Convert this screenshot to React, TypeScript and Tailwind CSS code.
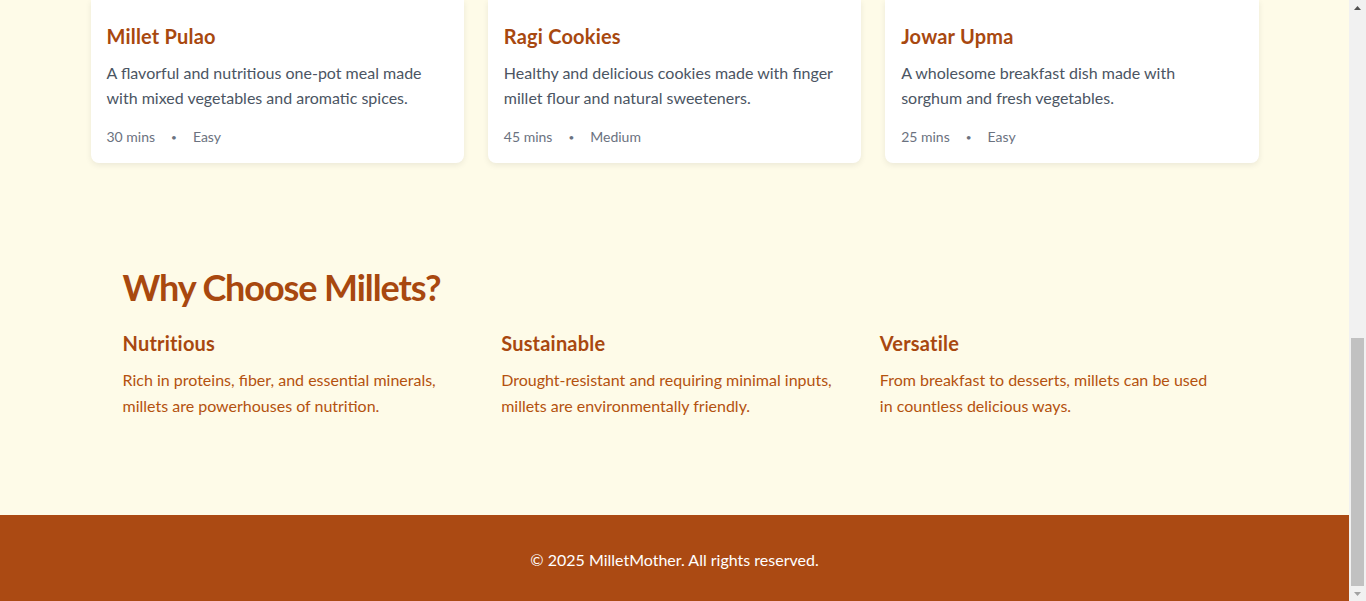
import React from "react";

type Recipe = {
  title: string;
  description: string;
  time: string;
  level: string;
};

const recipes: Recipe[] = [
  {
    title: "Millet Pulao",
    description: "A flavorful and nutritious one-pot meal made with mixed vegetables and aromatic spices.",
    time: "30 mins",
    level: "Easy",
  },
  {
    title: "Ragi Cookies",
    description: "Healthy and delicious cookies made with finger millet flour and natural sweeteners.",
    time: "45 mins",
    level: "Medium",
  },
  {
    title: "Jowar Upma",
    description: "A wholesome breakfast dish made with sorghum and fresh vegetables.",
    time: "25 mins",
    level: "Easy",
  },
];

const reasons = [
  {
    title: "Nutritious",
    text: "Rich in proteins, fiber, and essential minerals, millets are powerhouses of nutrition.",
  },
  {
    title: "Sustainable",
    text: "Drought-resistant and requiring minimal inputs, millets are environmentally friendly.",
  },
  {
    title: "Versatile",
    text: "From breakfast to desserts, millets can be used in countless delicious ways.",
  },
];

const RecipeCard: React.FC<{ recipe: Recipe }> = ({ recipe }) => (
  <div className="bg-white rounded-b-lg shadow-[0_2px_6px_rgba(0,0,0,0.08)] px-4 pt-[22px] pb-4">
    <h3 className="text-xl leading-7 font-bold tracking-[0.01em] text-[#a8480f]">{recipe.title}</h3>
    <p className="mt-[10px] pr-[6px] text-base leading-[25px] text-[#4b5563]">{recipe.description}</p>
    <div className="mt-[17px] flex items-center gap-4 text-sm leading-5 text-[#6b7280]">
      <span>{recipe.time}</span>
      <span className="text-[10px]">•</span>
      <span>{recipe.level}</span>
    </div>
  </div>
);

const Scrollbar: React.FC = () => (
  <aside className="w-[17px] shrink-0 bg-[#f1f1f1] flex flex-col items-center">
    <div className="h-[15px] flex items-center justify-center">
      <svg width="7" height="4" viewBox="0 0 7 4">
        <polygon points="3.5,0 7,4 0,4" fill="#505050" />
      </svg>
    </div>
    <div className="flex-1 w-full flex flex-col justify-end px-[2px]">
      <div className="h-[248px] bg-[#c1c1c1]" />
    </div>
    <div className="h-[15px] flex items-center justify-center">
      <svg width="7" height="4" viewBox="0 0 7 4">
        <polygon points="0,0 7,0 3.5,4" fill="#a3a3a3" />
      </svg>
    </div>
  </aside>
);

export default function App() {
  return (
    <div className="flex h-[601px] overflow-hidden font-['Lato','Noto_Sans',sans-serif]">
      <main className="flex-1 min-w-0 bg-[#fefbe8] flex flex-col">
        <section className="max-w-[1200px] w-full mx-auto px-4">
          <div className="grid grid-cols-3 gap-6">
            {recipes.map((r) => (
              <RecipeCard key={r.title} recipe={r} />
            ))}
          </div>
        </section>

        <section className="max-w-[1200px] w-full mx-auto px-4 pt-[104px] pb-[96px]">
          <div className="px-8">
            <h2 className="text-4xl leading-10 font-bold tracking-[-0.03em] text-[#a8480f] mb-[22px]">
              Why Choose Millets?
            </h2>
            <div className="grid grid-cols-3 gap-8">
              {reasons.map((r) => (
                <div key={r.title} className="pr-2">
                  <h3 className="text-xl leading-7 font-bold tracking-[0.01em] text-[#a8480f] mb-2.5">{r.title}</h3>
                  <p className="text-base leading-[26px] text-[#b4520f]">{r.text}</p>
                </div>
              ))}
            </div>
          </div>
        </section>

        <footer className="bg-[#ab4a13] pt-[33px] pb-8 text-center">
          <p className="text-base leading-6 text-white">© 2025 MilletMother. All rights reserved.</p>
        </footer>
      </main>
      <Scrollbar />
    </div>
  );
}
